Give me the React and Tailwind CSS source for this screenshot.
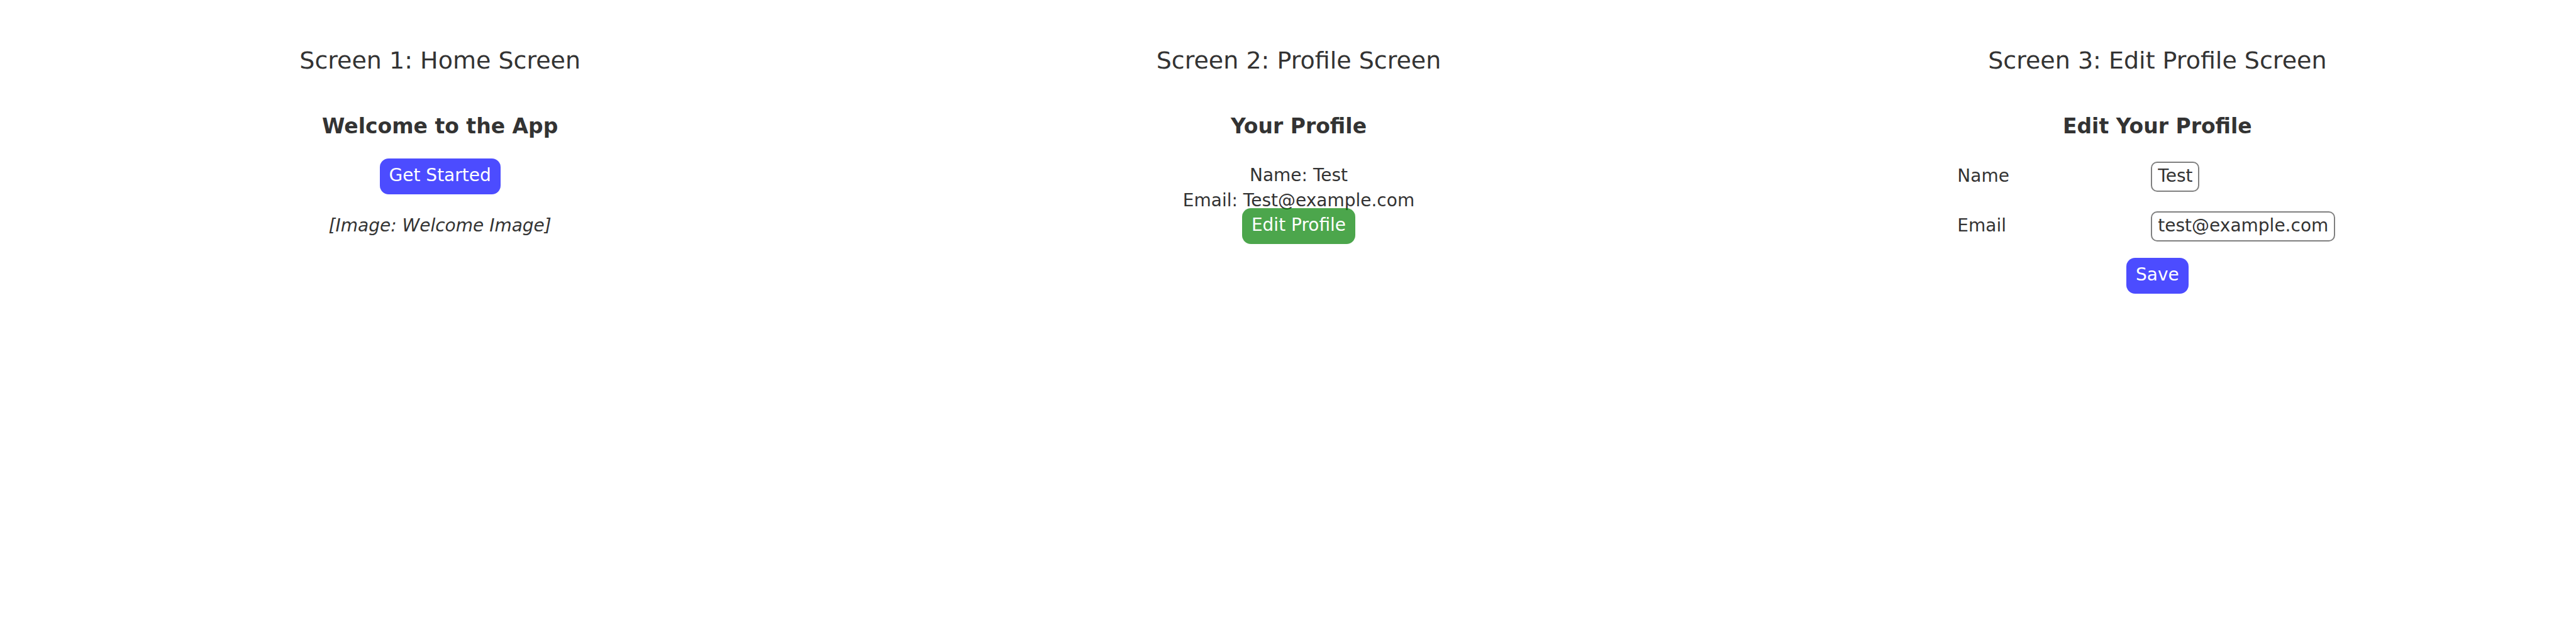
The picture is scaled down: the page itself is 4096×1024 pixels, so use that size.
import { useState } from 'react';

function Screen({ title, heading, children }) {
  return (
    <section className="flex flex-col items-center pl-[34px] pt-[74px]">
      <h1 className="mb-[63px] whitespace-nowrap text-[38px] leading-[44px]">{title}</h1>
      <h2 className="whitespace-nowrap text-[33px] font-bold leading-[40px]">{heading}</h2>
      {children}
    </section>
  );
}

function HomeScreen() {
  return (
    <Screen title="Screen 1: Home Screen" heading="Welcome to the App">
      <button
        type="button"
        className="mt-[31px] rounded-[14px] bg-[#0000ff]/70 px-[15px] pb-[10px] pt-[7px] text-white"
      >
        Get Started
      </button>
      <p className="mt-[30px] italic">[Image: Welcome Image]</p>
    </Screen>
  );
}

function ProfileScreen() {
  return (
    <Screen title="Screen 2: Profile Screen" heading="Your Profile">
      <p className="mt-[38px]">Name: Test</p>
      <p>Email: Test@example.com</p>
      <button
        type="button"
        className="relative -mt-[8px] rounded-[14px] bg-[#008000]/70 px-[15px] pb-[10px] pt-[7px] text-white"
      >
        Edit Profile
      </button>
    </Screen>
  );
}

function Field({ id, label, type, value, onChange }) {
  return (
    <div className="grid grid-cols-[308px_1fr] items-baseline">
      <label htmlFor={id}>{label}</label>
      <input
        id={id}
        type={type}
        value={value}
        onChange={(event) => onChange(event.target.value)}
        className="field-sizing-content h-12 justify-self-start rounded-[10px] border-2 border-[#808080] bg-white px-[9px] pb-1 leading-[40px]"
      />
    </div>
  );
}

function EditProfileScreen() {
  const [name, setName] = useState('Test');
  const [email, setEmail] = useState('test@example.com');

  return (
    <Screen title="Screen 3: Edit Profile Screen" heading="Edit Your Profile">
      <form
        className="mt-[36px] flex w-[636px] flex-col"
        onSubmit={(event) => event.preventDefault()}
      >
        <div className="flex flex-col gap-[31px]">
          <Field id="name" label="Name" type="text" value={name} onChange={setName} />
          <Field id="email" label="Email" type="text" value={email} onChange={setEmail} />
        </div>
        <button
          type="submit"
          className="mt-[26px] self-center rounded-[14px] bg-[#0000ff]/70 px-[15px] pb-[10px] pt-[7px] text-white"
        >
          Save
        </button>
      </form>
    </Screen>
  );
}

export default function App() {
  return (
    <main className="grid min-h-screen grid-cols-3 bg-white font-['DejaVu_Sans',sans-serif] text-[28px] leading-[40px] text-[#333333]">
      <HomeScreen />
      <ProfileScreen />
      <EditProfileScreen />
    </main>
  );
}
